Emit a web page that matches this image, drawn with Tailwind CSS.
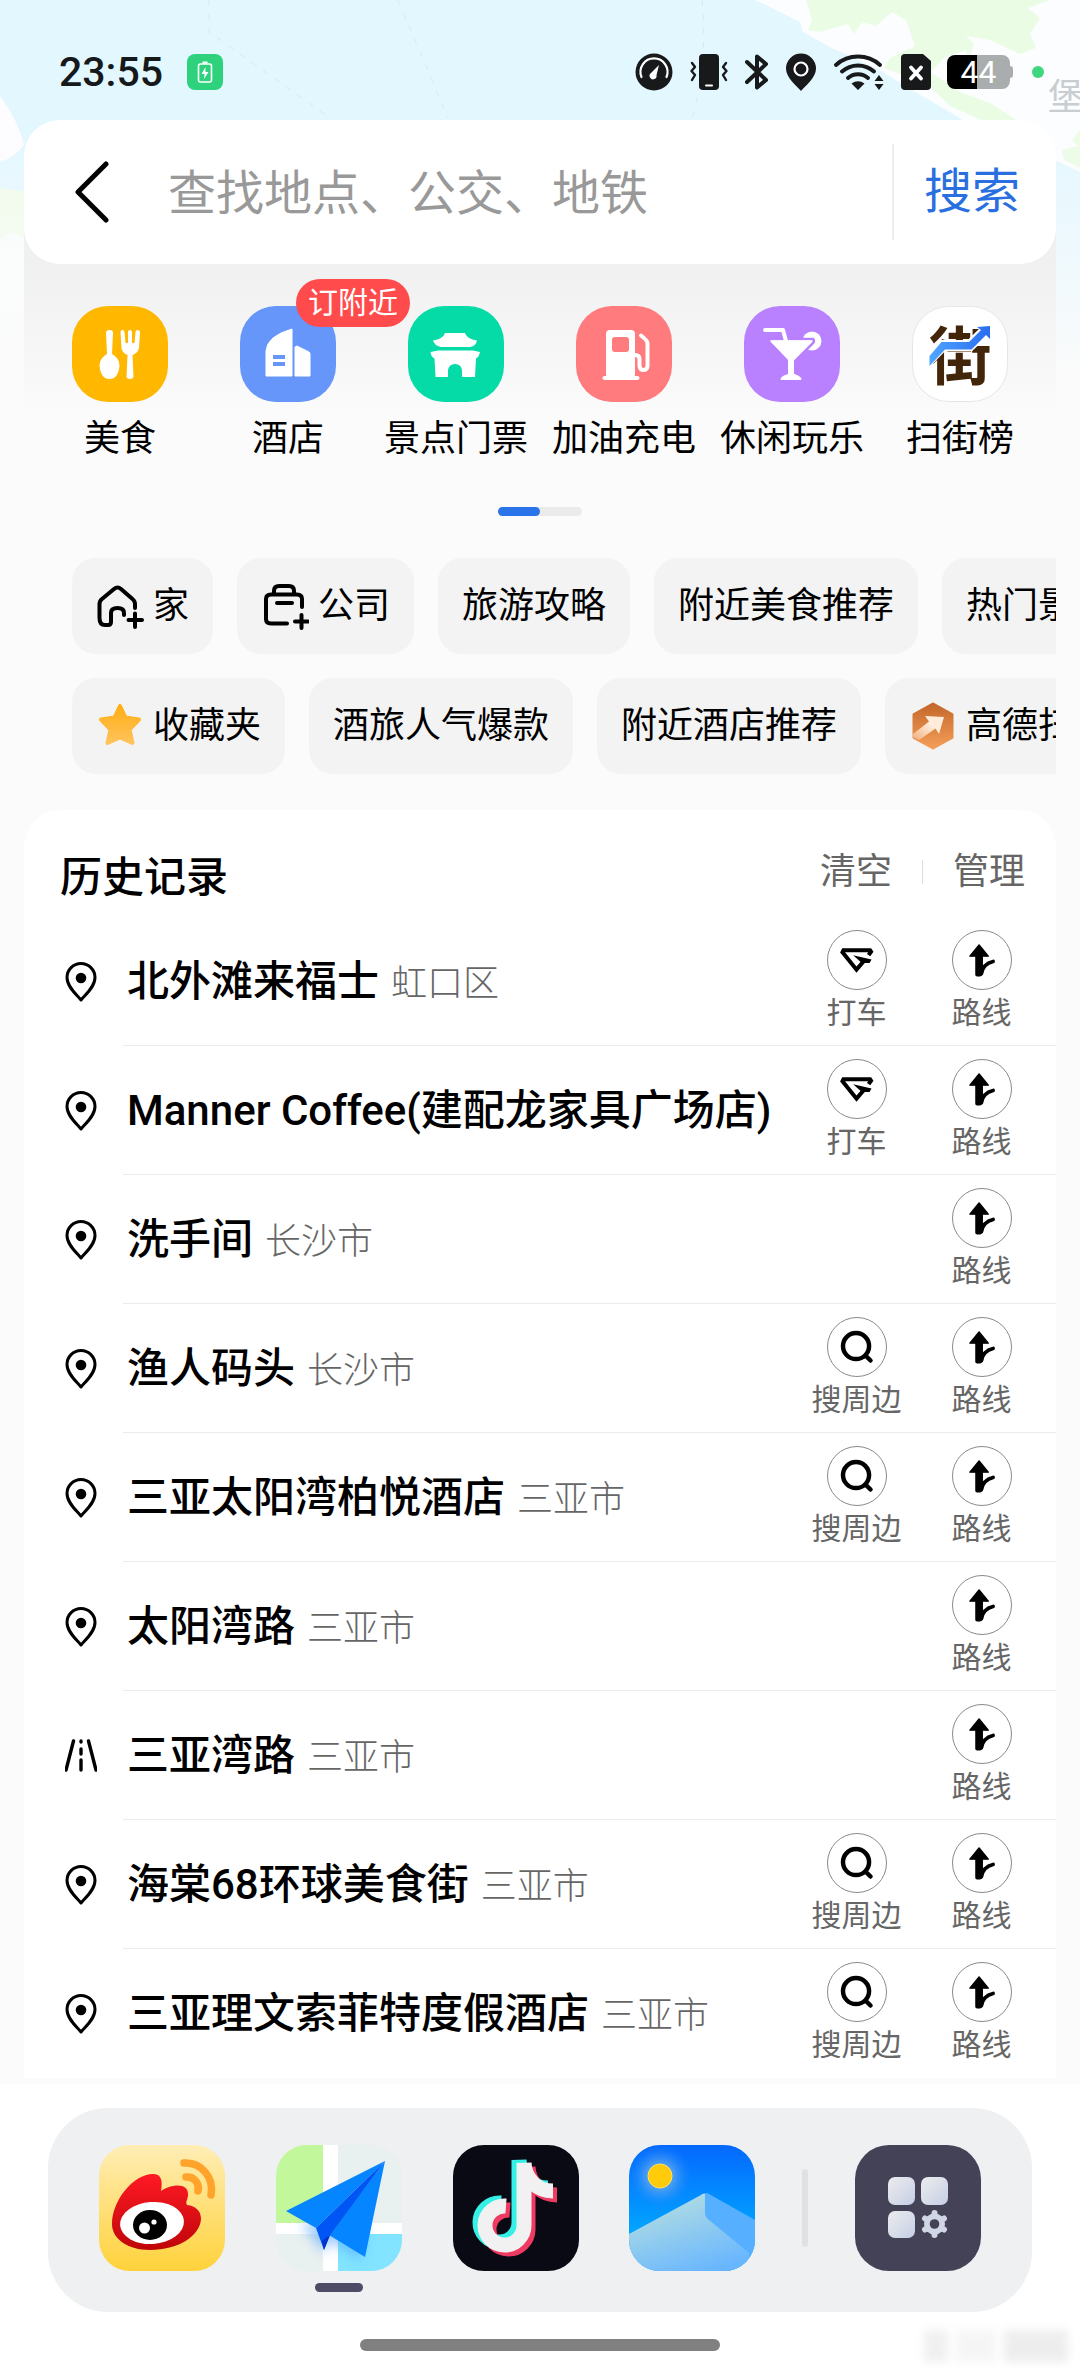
<!DOCTYPE html>
<html lang="zh-CN">

<head>
  <meta charset="UTF-8">
  <meta name="viewport" content="width=device-width, initial-scale=1.0">
  <script src="https://cdn.jsdelivr.net/npm/@tailwindcss/browser@4"></script>
  <title>搜索</title>
</head>

<body class="bg-[#fbfbfb] font-['Roboto','Noto_Sans_CJK_SC',sans-serif] text-black">

  <!-- shared icons -->
  <svg class="hidden">
    <symbol id="pin" viewBox="0 0 32 40">
      <path d="M16 38 C12 33 2 25 2 15.500 A14 14 0 0 1 30 15.500 C30 25 20 33 16 38 Z" fill="none" stroke="#000" stroke-width="3" stroke-linejoin="round" />
      <circle cx="16" cy="16" r="5.300" />
    </symbol>
    <symbol id="road" viewBox="0 0 32 40">
      <path d="M8.500 5 L1 34 M23.500 5 L31 34 M16 5 V6 M16 13 V18 M16 24 V34" fill="none" stroke="#000" stroke-width="3.400" stroke-linecap="round" />
    </symbol>
    <symbol id="taxi" viewBox="0 0 60 60">
      <path d="M42 25 L44.500 21.500 L43.500 20 H16 L15 22 L29.500 40 L38 30" fill="none" stroke="#000" stroke-width="4.200" />
      <path d="M26 25 L45 29.500 L43 33 H35 Z" />
    </symbol>
    <symbol id="around" viewBox="0 0 60 60">
      <circle cx="29" cy="29" r="13.500" fill="none" stroke="#000" stroke-width="4.600" />
      <path d="M39 39 L44 44" stroke="#000" stroke-width="4.600" stroke-linecap="round" />
    </symbol>
    <symbol id="route" viewBox="0 0 60 60">
      <path d="M27 14.500 L36.500 26 H17.500 Z" stroke="#000" stroke-width="1.500" stroke-linejoin="round" />
      <path d="M23 25 H31 V42 Q31 47 28 47 H25 Q23 47 23 45 Z" />
      <path d="M41.500 31.500 Q31 34 29.500 44" fill="none" stroke="#000" stroke-width="3.800" stroke-linecap="round" />
    </symbol>
  </svg>

  <div class="relative overflow-hidden">
    <!-- map behind the header -->
    <svg class="absolute inset-x-0 top-0 h-[420px] w-full" viewBox="0 0 1080 420" preserveAspectRatio="none">
      <defs>
        <linearGradient id="fade" x1="0" y1="0" x2="0" y2="1">
          <stop offset="0.300" stop-color="#fbfbfb" stop-opacity="0" />
          <stop offset="0.900" stop-color="#fbfbfb" />
        </linearGradient>
      </defs>
      <rect width="1080" height="420" fill="#e3f7ff" />
      <path d="M0 96 Q18 120 24 145 Q14 158 0 162 Z" fill="#fdfdff" />
      <path d="M0 188 L30 192 V290 H0 Z" fill="#effbe9" />
      <path d="M0 240 L10 232 L24 238 V420 H0 Z" fill="#fafdfd" />
      <path d="M755 0 L772 8 L800 22 L803 32 L830 47 L880 70 L905 86 L960 118 L970 130 L1055 160 L1080 172 V0 Z" fill="#fcfdff" />
      <path d="M806 0 L812 20 L808 30 L820 32 L848 24 L854 34 L862 22 L876 26 L892 12 L906 20 L915 46 L890 58 L884 68 L900 74 L925 82 L950 106 L990 124 L1016 120 L992 104 L960 92 L930 72 L944 58 L966 50 L968 62 L974 44 L966 36 L990 40 L1020 54 L1036 48 L1030 34 L1040 18 L1028 8 L1050 0 Z" fill="#ebfce5" />
      <path d="M1080 130 L1072 140 L1078 146 L1062 150 L1064 160 L1080 168 Z" fill="#ebfce5" />
      <path d="M209 0 V32 L330 118 M398 0 L448 118 M702 0 Q708 60 692 120" fill="none" stroke="#d5ebf2" stroke-dasharray="6 8" />
      <rect width="1080" height="420" fill="url(#fade)" />
    </svg>
    <span class="absolute left-full top-[78px] -ml-8 whitespace-nowrap text-4xl text-[#c9cdd0]">堡</span>

    <!-- status bar -->
    <div class="relative flex h-[120px] items-center justify-between pt-6 pl-[59px] pr-9">
      <div class="flex items-center gap-6">
        <span class="text-[41px] font-medium leading-none text-[#15191c]">23:55</span>
        <svg class="size-9" viewBox="0 0 36 36">
          <rect width="36" height="36" rx="8" fill="#2ed27c" />
          <rect x="11.500" y="10" width="13" height="18" rx="2" fill="none" stroke="#fff" stroke-width="1.600" />
          <path d="M15.500 7.500 H20.500 V9.500 H15.500 Z" fill="#fff" />
          <path d="M18.500 13 L14.500 20 H17.500 L17 25 L21.500 18 H18.500 Z" fill="#fff" />
        </svg>
      </div>
      <div class="flex items-center gap-4">
        <svg class="size-[38px]" viewBox="0 0 38 38">
          <circle cx="19" cy="19" r="18.500" fill="#17191b" />
          <path d="M6.500 24 A13.500 13.500 0 1 1 31.500 24" fill="none" stroke="#fff" stroke-width="2.200" stroke-linecap="round" />
          <path d="M24 12 L21.500 22 A3.500 3.500 0 1 1 16 20 Z" fill="#fff" />
        </svg>
        <svg class="h-[38px] w-10" viewBox="0 0 40 38">
          <rect x="10" y="1" width="20" height="36" rx="4" fill="#17191b" />
          <path d="M17 32.500 H23" stroke="#fff" stroke-width="2" stroke-linecap="round" />
          <path d="M3 10 L6 14 L2.500 18 L6 22 L3 27 M37 10 L34 14 L37.500 18 L34 22 L37 27" fill="none" stroke="#17191b" stroke-width="2.400" stroke-linecap="round" stroke-linejoin="round" />
        </svg>
        <svg class="h-[38px] w-6" viewBox="0 0 24 38">
          <path d="M2 9 L21 27 L12 34.500 V3.500 L21 11 L2 29" fill="none" stroke="#17191b" stroke-width="4" stroke-linecap="round" stroke-linejoin="round" />
        </svg>
        <svg class="h-[38px] w-8" viewBox="0 0 32 38">
          <path d="M16 38 C12 33 1 25 1 15.500 A15 15 0 0 1 31 15.500 C31 25 20 33 16 38 Z" fill="#17191b" />
          <circle cx="16" cy="16" r="6.500" fill="none" stroke="#fff" stroke-width="2.200" />
        </svg>
        <svg class="h-[38px] w-[52px]" viewBox="0 0 52 38">
          <path d="M3 12 A33 33 0 0 1 47 12 M9 18.500 A24 24 0 0 1 41 18.500 M15 25 A15 15 0 0 1 35 25" fill="none" stroke="#17191b" stroke-width="4" stroke-linecap="round" />
          <path d="M25 37 L18.500 30.500 Q25 26 31.500 30.500 Z M46 22 L50.500 28 H41.500 Z M41.500 31 H50.500 L46 37 Z" fill="#17191b" />
        </svg>
        <svg class="h-[38px] w-[30px]" viewBox="0 0 30 38">
          <path d="M4 1 H22 L30 8 V33 Q30 37 26 37 H4 Q0 37 0 33 V5 Q0 1 4 1 Z" fill="#17191b" />
          <path d="M10 14.500 L20 25.500 M20 14.500 L10 25.500" stroke="#fff" stroke-width="3.800" stroke-linecap="round" />
        </svg>
        <div class="flex items-center">
          <span class="flex h-[34px] w-[63px] items-center justify-center rounded-lg bg-linear-to-r from-black from-48% to-[#a9adad] to-48% text-[32px] leading-none text-white">44</span>
          <span class="h-3 w-[3px] rounded-r-sm bg-[#a9adad]"></span>
          <span class="ml-[19px] size-3 rounded-full bg-[#3fd67f]"></span>
        </div>
      </div>
    </div>

    <!-- search box and shortcuts -->
    <main class="relative mx-6">
      <form class="relative z-10 flex h-36 items-center rounded-[36px] bg-white">
        <button type="button" aria-label="返回" class="pl-12 pr-[54px]">
          <svg class="h-[62px] w-[42px]" viewBox="0 0 42 62">
            <path d="M34 3 L6 31 L34 59" fill="none" stroke="#000" stroke-width="5" stroke-linecap="round" stroke-linejoin="round" />
          </svg>
        </button>
        <input type="text" aria-label="搜索地点" placeholder="查找地点、公交、地铁" class="min-w-0 flex-1 pt-0.5 text-5xl text-black outline-none placeholder:text-[#999999]">
        <span class="h-24 w-0.5 bg-[#eeeeee]"></span>
        <button type="submit" class="pl-[30px] pr-9 text-5xl text-[#2a6fe0]">搜索</button>
      </form>

      <div class="-mt-9 bg-linear-to-b from-[#f0f0f0] from-10% via-[#fbfbfb] via-60% to-[#fbfbfb] px-3 pt-[78px] pb-6">
        <nav class="grid grid-cols-6 text-4xl leading-12">
          <a href="#" class="flex flex-col items-center gap-[13px] whitespace-nowrap">
            <svg class="size-24" viewBox="0 0 96 96">
              <rect width="96" height="96" rx="36" fill="#ffb700" />
              <path d="M34 27 Q34 24 37.500 24 Q41 24 41 27 L40 48 Q47.500 52 47.500 60 Q46 73 37.500 73 Q29 73 27.500 60 Q27.500 52 35 48 Z" fill="#fff" />
              <path d="M48.500 26 Q48.500 24 50.500 24 Q52.500 24 52.500 26 L53.500 37 H56 V26 Q56 24 58 24 Q60 24 60 26 V37 H62.500 L63.500 26 Q63.500 24 65.500 24 Q68 24 68 26 L67 42 Q66 47 60.500 49 L61.500 71 Q61 73 58 73 Q55 73 54.500 71 L55.500 49 Q50 47 49.500 42 Z" fill="#fff" />
            </svg>
            美食
          </a>
          <a href="#" class="relative flex flex-col items-center gap-[13px] whitespace-nowrap">
            <svg class="size-24" viewBox="0 0 96 96">
              <rect width="96" height="96" rx="36" fill="#6796fb" />
              <path d="M26 70 V45 Q27 30 52 23 V70 Z M55 70 V41 L57 40 L69 46 Q70 47 70 48 V70 Z" fill="#fff" stroke="#fff" stroke-linejoin="round" />
              <path d="M33 49 H45 V53 H33 Z M33 56 H45 V60 H33 Z" fill="#6796fb" />
            </svg>
            酒店
            <span class="absolute -top-[27px] left-1/2 ml-2 flex h-12 w-[114px] items-center justify-center rounded-full bg-[#ff4b4c] text-[30px] leading-none text-white">订附近</span>
          </a>
          <a href="#" class="flex flex-col items-center gap-[13px] whitespace-nowrap">
            <svg class="size-24" viewBox="0 0 96 96">
              <rect width="96" height="96" rx="36" fill="#04dba6" />
              <path d="M37 27 H57 Q59 33 69 34.500 Q68 40 62 41 H33 Q27 40 25 34.500 Q35 33 37 27 Z" fill="#fff" />
              <path d="M30 44.500 H65 L72 46 Q71 51 68 52.500 L67 71 H54 V64 Q53 58 47 58 Q41 58 40 64 V71 H27.500 L26.500 52.500 Q23 51 22.500 46 Z" fill="#fff" />
            </svg>
            景点门票
          </a>
          <a href="#" class="flex flex-col items-center gap-[13px] whitespace-nowrap">
            <svg class="size-24" viewBox="0 0 96 96">
              <rect width="96" height="96" rx="36" fill="#ff7b7e" />
              <rect x="30" y="24" width="29" height="48" rx="4" fill="#fff" />
              <rect x="36" y="31" width="17" height="15" rx="3" fill="#ff7b7e" />
              <path d="M28.500 72 H61.500 M59 49 Q63.500 49 63.500 53 V60 Q64 64 67.500 64 Q71 64 71.500 60 V37 Q71 34 65 29.500" fill="none" stroke="#fff" stroke-width="4" stroke-linecap="round" />
            </svg>
            加油充电
          </a>
          <a href="#" class="flex flex-col items-center gap-[13px] whitespace-nowrap">
            <svg class="size-24" viewBox="0 0 96 96">
              <rect width="96" height="96" rx="36" fill="#b980ff" />
              <circle cx="68" cy="35" r="9.500" fill="#fff" />
              <path d="M26 33 H69 Q71 35 69 37 L51 55 V67 Q57 70 58 74 H36 Q37 70 45 67 V55 L26 37 Q24 34 26 33 Z" fill="#fff" stroke="#b980ff" stroke-width="2.500" />
              <path d="M28 35.500 H67 L49 53.500 V69 Q55 70 56.500 73 H37.500 Q39 70 45 69 V53.500 Z" fill="#fff" stroke="#fff" stroke-width="2" stroke-linejoin="round" />
              <path d="M21 24 H39 L42 35" fill="none" stroke="#fff" stroke-width="4" stroke-linecap="round" stroke-linejoin="round" />
            </svg>
            休闲玩乐
          </a>
          <a href="#" class="flex flex-col items-center gap-[13px] whitespace-nowrap">
            <svg class="size-24" viewBox="0 0 96 96">
              <defs>
                <linearGradient id="trend" x1="0" y1="0" x2="1" y2="0">
                  <stop offset="0" stop-color="#4fa6ff" />
                  <stop offset="1" stop-color="#2a6cf0" />
                </linearGradient>
              </defs>
              <rect x="0.500" y="0.500" width="95" height="95" rx="36" fill="#fff" stroke="#e6e6e6" />
              <text x="48" y="73" text-anchor="middle" font-size="63" font-weight="700" fill="#432509">街</text>
              <path d="M15 56 L31 39.500 H58 L76 22" fill="none" stroke="#fff" stroke-width="11" />
              <path d="M17.500 50 L29.500 36 H57 L69 24 L65 21 L78 20 V33 L74 29 L59.500 43.500 H33 L17.500 60 Z" fill="url(#trend)" />
            </svg>
            扫街榜
          </a>
        </nav>
        <div class="mt-11 flex justify-center">
          <div class="h-[9px] w-[84px] rounded-full bg-[#ebebeb]">
            <div class="h-full w-1/2 rounded-full bg-[#2a73e8]"></div>
          </div>
        </div>
      </div>

      <div class="space-y-6 overflow-hidden pt-[18px] pl-12 text-4xl">
        <div class="flex gap-6 *:flex *:h-24 *:shrink-0 *:items-center *:gap-[9px] *:rounded-3xl *:bg-[#f3f3f3] *:px-6">
          <button type="button">
            <svg class="size-12" viewBox="0 0 48 48" fill="none" stroke="#000" stroke-width="4" stroke-linecap="round" stroke-linejoin="round">
              <path d="M39 26 V22 Q39 19 36.500 17 L25 7 Q21.500 4 18 7 L6 17 Q3.500 19 3.500 22 V36 Q3.500 43 9 43 H12 Q15 43 15 40 V31 Q15 26 21.500 26 Q28 26 28 31 V33" />
              <path d="M39 31.500 V45 M32.500 38 H46" />
            </svg>
            家
          </button>
          <button type="button">
            <svg class="size-12" viewBox="0 0 48 48" fill="none" stroke="#000" stroke-width="4" stroke-linecap="round" stroke-linejoin="round">
              <path d="M41 25 V17 Q41 12.500 36 12.500 H10 Q5 12.500 5 17 V37 Q5 41.500 10 41.500 H26 M13 12 V9 Q13 4 18 4 H28 Q33 4 33 9 V12 M16 21 H31" />
              <path d="M40.500 33 V46 M34 39.500 H47" />
            </svg>
            公司
          </button>
          <button type="button">旅游攻略</button>
          <button type="button">附近美食推荐</button>
          <button type="button">热门景点</button>
        </div>
        <div class="flex gap-6 *:flex *:h-24 *:shrink-0 *:items-center *:gap-[9px] *:rounded-3xl *:bg-[#f3f3f3] *:px-6">
          <button type="button">
            <svg class="size-12" viewBox="0 0 48 48">
              <defs>
                <linearGradient id="gold" x1="0" y1="0" x2="0" y2="1">
                  <stop offset="0" stop-color="#ffae14" />
                  <stop offset="1" stop-color="#ffc35c" />
                </linearGradient>
              </defs>
              <path d="M24 4 L29.500 15.500 L43 17.500 L33.500 27.500 L36.500 41 L24 35.500 L11.500 41 L14.500 27.500 L5 17.500 L18.500 15.500 Z" fill="url(#gold)" stroke="url(#gold)" stroke-width="4" stroke-linejoin="round" />
            </svg>
            收藏夹
          </button>
          <button type="button">酒旅人气爆款</button>
          <button type="button">附近酒店推荐</button>
          <button type="button">
            <svg class="size-12" viewBox="0 0 48 48">
              <defs>
                <linearGradient id="copper" x1="0" y1="0" x2="0" y2="1">
                  <stop offset="0" stop-color="#c4682b" />
                  <stop offset="1" stop-color="#f49d59" />
                </linearGradient>
                <linearGradient id="cream" x1="0" y1="1" x2="0.600" y2="0.400">
                  <stop offset="0" stop-color="#f3b07c" />
                  <stop offset="1" stop-color="#ffecdb" />
                </linearGradient>
              </defs>
              <path d="M24 2 L43 12.500 V35.500 L24 46 L5 35.500 V12.500 Z" fill="url(#copper)" stroke="url(#copper)" stroke-width="3" stroke-linejoin="round" />
              <path d="M4 32 L20 19.500 L16 14 L35 15 L30 32 L26.500 26.500 L10 38 L4 35 Z" fill="url(#cream)" />
            </svg>
            高德扫街榜
          </button>
        </div>
      </div>

      <!-- history -->
      <section class="mt-9 rounded-t-[36px] bg-white">
        <div class="flex items-center justify-between pt-[38px] pb-[9px] pl-9 pr-[31px]">
          <h2 class="text-[42px] font-medium leading-[60px]">历史记录</h2>
          <div class="flex items-center pb-3 text-4xl text-[#666666]">
            <button type="button">清空</button>
            <span class="mx-[30px] h-6 w-px bg-[#dddddd]"></span>
            <button type="button">管理</button>
          </div>
        </div>
        <ul id="history"></ul>
      </section>
    </main>
  </div>

  <!-- dock -->
  <footer class="relative mt-1.5 bg-white px-12 pt-6 pb-[21px]">
    <div class="flex h-[204px] items-center justify-between rounded-[60px] bg-[#eef0f2] px-[51px] pb-1">
      <button type="button" aria-label="微博">
        <svg class="size-[126px]" viewBox="0 0 126 126">
          <defs>
            <linearGradient id="wbBg" x1="0" y1="0" x2="0" y2="1">
              <stop offset="0" stop-color="#ffedb5" />
              <stop offset="1" stop-color="#ffd23b" />
            </linearGradient>
            <linearGradient id="wbRed" x1="0" y1="0" x2="0" y2="1">
              <stop offset="0" stop-color="#ff1a24" />
              <stop offset="1" stop-color="#bf0509" />
            </linearGradient>
          </defs>
          <rect width="126" height="126" rx="31" fill="url(#wbBg)" />
          <path d="M13 79 C13 56 34 29 54 29 C62 29 64 35 62 46 C72 39 90 37 89 50 C89 54 86 57 88 60 C97 61 102 66 102 74 C101 91 79 105 51 105 C29 105 13 94 13 79 Z" fill="url(#wbRed)" />
          <ellipse cx="53" cy="78" rx="32" ry="21" fill="#fff" transform="rotate(-4 53 78)" />
          <ellipse cx="51" cy="80" rx="17" ry="15" />
          <circle cx="45.500" cy="83" r="5.500" fill="#fff" />
          <circle cx="55" cy="77" r="2.600" fill="#fff" />
          <path d="M85 18 C103 17 115 33 112 50 M87 32 C95 31 101 39 99 46" fill="none" stroke="#ffa32b" stroke-width="7.500" stroke-linecap="round" />
        </svg>
      </button>
      <button type="button" aria-label="高德地图" class="relative">
        <svg class="size-[126px]" viewBox="0 0 126 126">
          <defs>
            <clipPath id="mapTile"><rect width="126" height="126" rx="31" /></clipPath>
            <filter id="soft" x="-50%" y="-50%" width="200%" height="200%"><feGaussianBlur stdDeviation="6" /></filter>
          </defs>
          <g clip-path="url(#mapTile)">
            <rect width="126" height="126" fill="#e9f0f0" />
            <rect width="47" height="78" fill="#c3f79b" />
            <rect x="62" y="89" width="64" height="37" fill="#82e4ff" />
            <path d="M47 0 H62 V78 H126 V89 H62 V126 H47 V89 H0 V78 H47 Z" fill="#fff" />
            <path d="M25 78 L48 108 L53 95 L85 116 L90 80 Z" fill="#59a8ff" opacity="0.600" filter="url(#soft)" />
          </g>
          <path d="M109 16 L10 66 L40 83 Z" fill="#0585ff" />
          <path d="M109 16 L53 90 L89 112 Z" fill="#0585ff" />
          <path d="M109 16 L40 83 L48 105 L54 90 Z" fill="#0056f5" />
          <path d="M54 90 L48 105 L46 96 Z" fill="#0033c9" />
        </svg>
        <span class="absolute left-1/2 top-full -ml-6 mt-3 h-[9px] w-12 rounded-full bg-[#4e4b66]"></span>
      </button>
      <button type="button" aria-label="抖音">
        <svg class="size-[126px]" viewBox="0 0 126 126">
          <rect width="126" height="126" rx="31" fill="#090a14" />
          <g fill="none" stroke-width="15">
            <path d="M53 61 A19.500 19.500 0 1 0 71 80 V18 C72 34 84 46 100 46" stroke="#35f0e6" transform="translate(-5 -3)" />
            <path d="M53 61 A19.500 19.500 0 1 0 71 80 V18 C72 34 84 46 100 46" stroke="#f03a62" transform="translate(4 4)" />
            <path d="M53 61 A19.500 19.500 0 1 0 71 80 V18 C72 34 84 46 100 46" stroke="#f1f1f1" />
          </g>
        </svg>
      </button>
      <button type="button" aria-label="相册">
        <svg class="size-[126px]" viewBox="0 0 126 126">
          <defs>
            <clipPath id="photoTile"><rect width="126" height="126" rx="31" /></clipPath>
            <linearGradient id="sky" x1="0" y1="0" x2="0" y2="1">
              <stop offset="0" stop-color="#0468ff" />
              <stop offset="0.700" stop-color="#02a6ff" />
            </linearGradient>
            <linearGradient id="snow" x1="0.200" y1="0" x2="0.700" y2="1">
              <stop offset="0" stop-color="#b8e0df" />
              <stop offset="1" stop-color="#68b6ff" />
            </linearGradient>
            <radialGradient id="glow">
              <stop offset="0.300" stop-color="#7fb4e6" stop-opacity="0.800" />
              <stop offset="1" stop-color="#1a84ff" stop-opacity="0" />
            </radialGradient>
          </defs>
          <g clip-path="url(#photoTile)">
            <rect width="126" height="126" fill="url(#sky)" />
            <circle cx="31" cy="31" r="32" fill="url(#glow)" />
            <circle cx="31" cy="31" r="12" fill="#ffcb0a" stroke="#ffdf63" />
            <path d="M74 49 Q77 47 80 49 L126 75 V126 H76 Z" fill="#57b0ff" />
            <path d="M0 89 L72 50 Q74 48 76 49 V68 Q76 72 80 75 L120 108 V126 H0 Z" fill="url(#snow)" />
          </g>
        </svg>
      </button>
      <span class="-mx-1 h-[78px] w-1.5 rounded-full bg-[#dfe1e2]"></span>
      <button type="button" aria-label="全部应用">
        <svg class="size-[126px]" viewBox="0 0 126 126">
          <defs>
            <linearGradient id="silver" x1="0" y1="0" x2="1" y2="1">
              <stop offset="0" stop-color="#ececee" />
              <stop offset="1" stop-color="#c5cfe4" />
            </linearGradient>
          </defs>
          <rect width="126" height="126" rx="34" fill="#434257" />
          <g fill="url(#silver)">
            <rect x="33" y="32" width="27" height="28" rx="7" />
            <rect x="66" y="32" width="27" height="28" rx="7" />
            <rect x="33" y="66" width="27" height="27" rx="7" />
          </g>
          <path d="M79.500 68 V90 M70 73.500 L89 84.500 M70 84.500 L89 73.500" stroke="#d0d6e3" stroke-width="6" stroke-linecap="round" />
          <circle cx="79.500" cy="79" r="10.500" fill="#d0d6e3" />
          <circle cx="79.500" cy="79" r="4.800" fill="#434257" />
        </svg>
      </button>
    </div>
    <div class="mx-auto mt-[27px] h-3 w-[360px] rounded-full bg-[#808080]"></div>
    <div class="absolute right-3 bottom-2.5 flex h-8 gap-2 opacity-60 blur-xs">
      <span class="w-6 bg-[#e6e6e6]"></span>
      <span class="w-10 bg-[#f0f0f0]"></span>
      <span class="w-16 bg-[#e2e2e2]"></span>
    </div>
  </footer>

  <script>
    const places = [
      { name: '北外滩来福士', area: '虹口区', extra: 'taxi' },
      { name: 'Manner Coffee(建配龙家具广场店)', area: '', extra: 'taxi' },
      { name: '洗手间', area: '长沙市' },
      { name: '渔人码头', area: '长沙市', extra: 'around' },
      { name: '三亚太阳湾柏悦酒店', area: '三亚市', extra: 'around' },
      { name: '太阳湾路', area: '三亚市' },
      { name: '三亚湾路', area: '三亚市', icon: 'road' },
      { name: '海棠68环球美食街', area: '三亚市', extra: 'around' },
      { name: '三亚理文索菲特度假酒店', area: '三亚市', extra: 'around' },
    ];
    const labels = { taxi: '打车', around: '搜周边', route: '路线' };

    function action(type) {
      return `<button type="button" class="flex w-[125px] flex-col items-center text-[30px] leading-[38px] text-[#666666]">
        <svg class="mb-1 size-[60px] rounded-full border border-[#8a8a8a]"><use href="#${type}" /></svg>${labels[type]}</button>`;
    }

    document.getElementById('history').innerHTML = places.map((p) => `
      <li class="group flex items-center">
        <svg class="ml-[41px] mr-[26px] h-10 w-8 shrink-0 overflow-visible"><use href="#${p.icon || 'pin'}" class="overflow-visible" /></svg>
        <div class="flex min-w-0 flex-1 items-center justify-between border-b border-[#ebebeb] pr-3 pt-[13px] pb-[13px] pl-1 group-last:border-transparent">
          <a href="#" class="whitespace-nowrap text-[42px] font-medium">${p.name}<span class="ml-3 text-4xl font-light text-[#666666]">${p.area}</span></a>
          <div class="flex shrink-0">${p.extra ? action(p.extra) : ''}${action('route')}</div>
        </div>
      </li>`).join('');
  </script>

</body>

</html>
